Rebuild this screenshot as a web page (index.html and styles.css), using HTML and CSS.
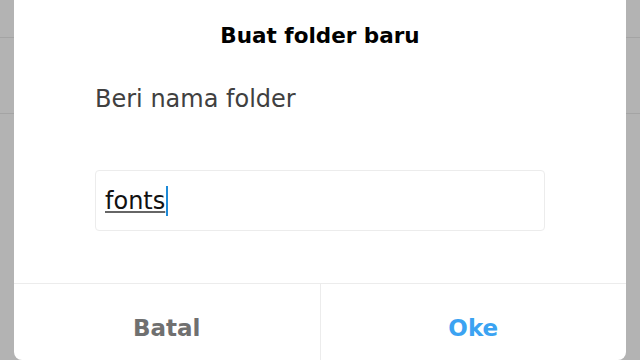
FILE: index.html
```html
<!DOCTYPE html>
<html lang="id">
<head>
<meta charset="utf-8">
<title>Buat folder baru</title>
<link rel="stylesheet" href="styles.css">
</head>
<body>
<div class="backdrop">
  <div class="row row-first"></div>
  <div class="row"></div>
  <div class="row row-last"></div>
</div>
<div class="dialog">
  <h1 class="title">Buat folder baru</h1>
  <p class="label">Beri nama folder</p>
  <div class="field"><span class="value">fonts</span><span class="caret"></span></div>
  <div class="actions">
    <button class="btn btn-cancel">Batal</button>
    <button class="btn btn-ok">Oke</button>
  </div>
</div>
</body>
</html>
```
FILE: styles.css
```css
* { box-sizing: border-box; }
html, body { margin: 0; padding: 0; width: 640px; height: 360px; overflow: hidden; }
body { background: #b3b3b3; font-family: "DejaVu Sans", "Noto Sans", sans-serif; position: relative; }
.backdrop { display: flex; flex-direction: column; }
.row { height: 76px; border-bottom: 1px solid #a4a4a4; }
.row-first { height: 38px; }
.row-last { border-bottom: 0; }
.dialog {
  position: absolute; left: 14px; right: 14px; top: -20px; bottom: 0;
  background: #fff; border-radius: 8px;
  display: flex; flex-direction: column;
  padding-top: 20px;
}
.title { margin: 0; height: 74px; display: flex; align-items: center; justify-content: center; padding-bottom: 3px;
  font-size: 21.5px; font-weight: 700; color: #000; }
.label { margin: 11px 81px 0; font-size: 24px; color: #404040; line-height: 28px; height: 28px; }
.field { margin: 57px 81px 0; height: 61px; border: 1px solid #ececec; border-radius: 4px;
  display: flex; align-items: center; padding-left: 9px; font-size: 24px; color: #111; }
.value { text-decoration: underline; text-decoration-color: #666; text-underline-offset: 2px; }
.caret { width: 2px; height: 30px; background: #1d8ad8; margin-left: 1px; }
.actions { margin-top: auto; height: 77px; border-top: 1px solid #ececec; display: flex; }
.btn { flex: 1; border: 0; background: none; font-family: inherit; font-size: 23px; font-weight: 700;
  padding: 12px 0 0; }
.btn-cancel { color: #707070; border-right: 1px solid #ececec; }
.btn-ok { color: #3ba3f2; }
```
